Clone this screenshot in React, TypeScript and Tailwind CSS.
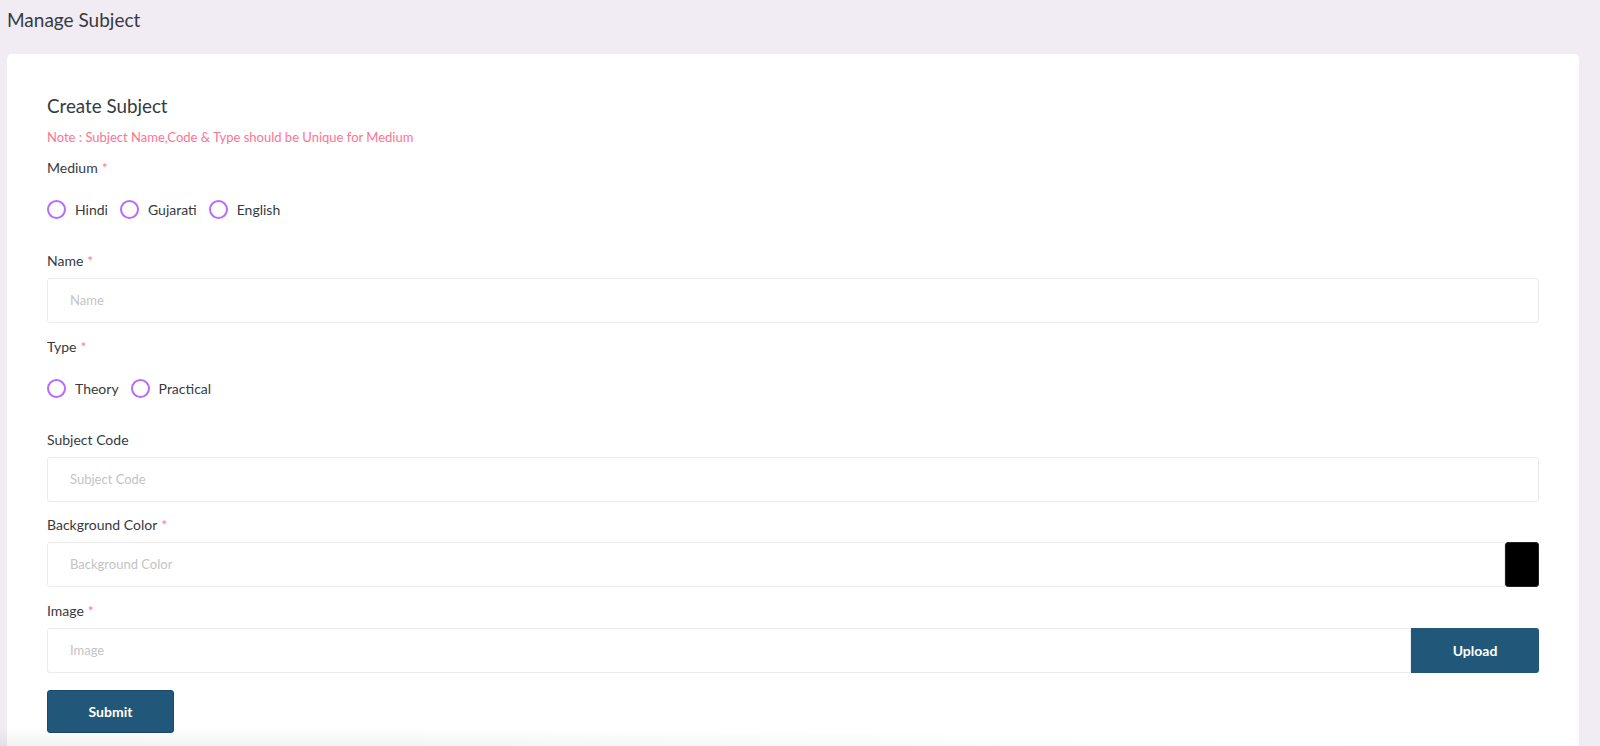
const Req = () => <span className="text-[#ff7b95] ml-1">*</span>;

const Radio = ({ label }: { label: string }) => (
  <label className="flex items-center gap-[9px] mr-[12px]">
    <span className="w-[19px] h-[19px] rounded-full border-2 border-[#b56cff] bg-white" />
    <span>{label}</span>
  </label>
);

const Field = ({ placeholder }: { placeholder: string }) => (
  <div className="h-[45px] flex-1 border border-[#ebebeb] rounded-l-[3px] flex items-center pl-[22px] text-[13px] text-[#c4c4c4]">
    {placeholder}
  </div>
);

export default function App() {
  return (
    <div className="relative min-h-[746px] bg-[#f1ecf4] font-['Lato',sans-serif] text-[#363a3f] overflow-hidden">
      <div className="h-[54px] pl-[7px] pt-[7px] text-[19px] leading-[26px]">Manage Subject</div>
      <div className="ml-[7px] w-[1572px] bg-white rounded-[5px] px-[40px] pt-[38px] pb-[20px] text-[14px] leading-[21px]">
        <div className="text-[18.8px] leading-[27px]">Create Subject</div>
        <div className="mt-[9px] text-[13px] leading-[18px] text-[#ff7391]">
          Note : Subject Name,Code &amp; Type should be Unique for Medium
        </div>

        <div className="mt-[11px]">Medium<Req /></div>
        <div className="mt-[21px] flex items-center">
          <Radio label="Hindi" />
          <Radio label="Gujarati" />
          <Radio label="English" />
        </div>

        <div className="mt-[30px]">Name<Req /></div>
        <div className="mt-[7px] flex">
          <div className="h-[45px] flex-1 border border-[#ebebeb] rounded-[3px] flex items-center pl-[22px] text-[13px] text-[#c4c4c4]">Name</div>
        </div>

        <div className="mt-[13px]">Type<Req /></div>
        <div className="mt-[21px] flex items-center">
          <Radio label="Theory" />
          <Radio label="Practical" />
        </div>

        <div className="mt-[30px]">Subject Code</div>
        <div className="mt-[7px] flex">
          <div className="h-[45px] flex-1 border border-[#ebebeb] rounded-[3px] flex items-center pl-[22px] text-[13px] text-[#c4c4c4]">Subject Code</div>
        </div>

        <div className="mt-[12px]">Background Color<Req /></div>
        <div className="mt-[7px] flex">
          <Field placeholder="Background Color" />
          <div className="w-[34px] h-[45px] bg-black rounded-[3px] border border-[#222]" />
        </div>

        <div className="mt-[13px]">Image<Req /></div>
        <div className="mt-[7px] flex">
          <Field placeholder="Image" />
          <button className="w-[128px] h-[45px] bg-[#215779] text-white font-bold text-[14px] rounded-r-[3px]">Upload</button>
        </div>

        <button className="mt-[17px] w-[127px] h-[43px] bg-[#215779] text-white font-bold text-[14px] rounded-[3px] border border-[#1a4a68]">
          Submit
        </button>
      </div>
      <div className="pointer-events-none absolute left-0 bottom-0 w-[1460px] h-[26px] bg-[radial-gradient(ellipse_at_bottom_left,rgba(0,0,0,0.07),transparent_70%)]" />
    </div>
  );
}
